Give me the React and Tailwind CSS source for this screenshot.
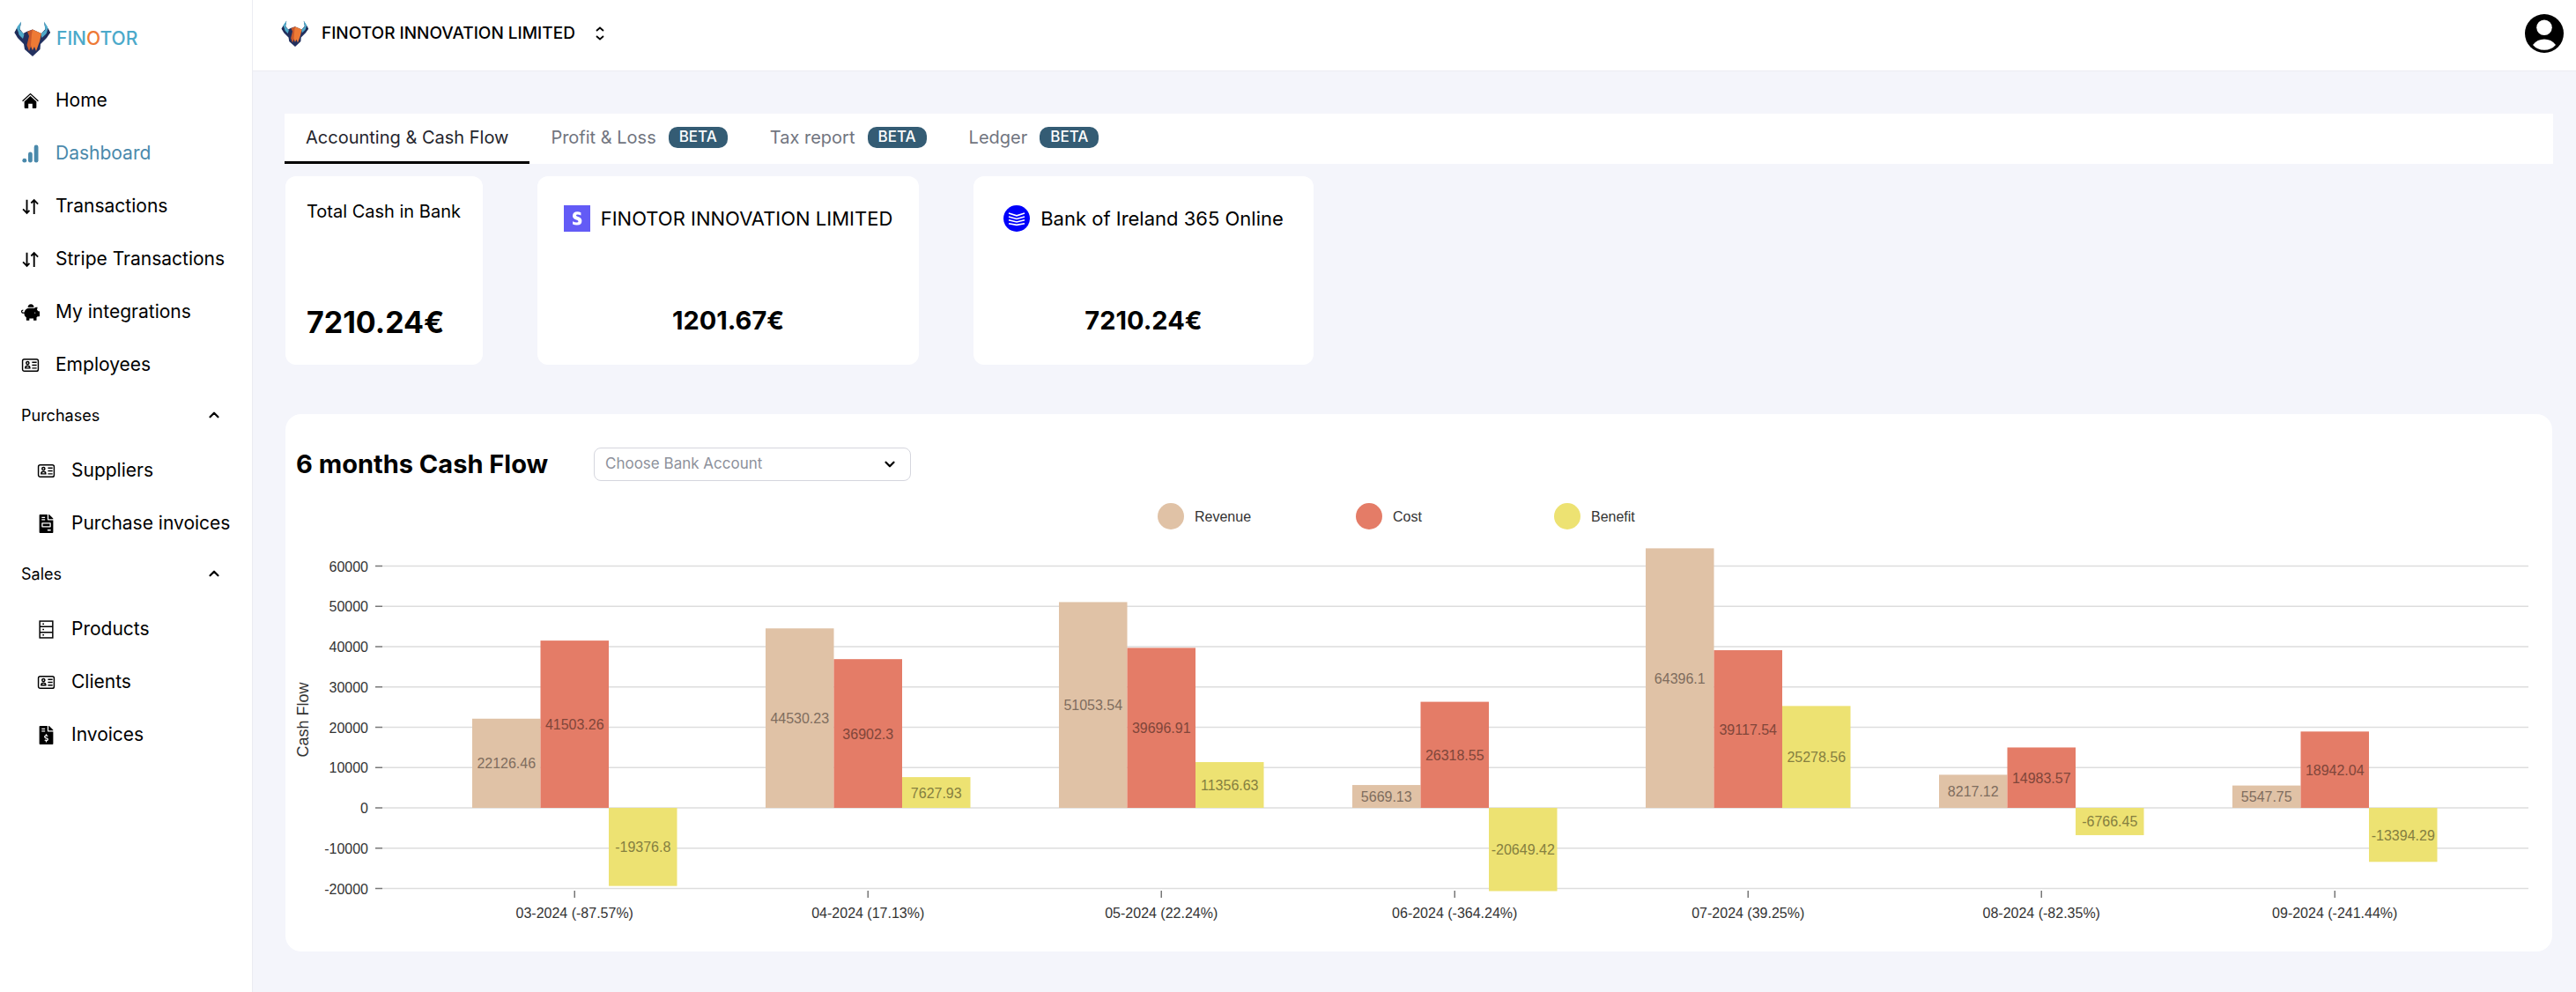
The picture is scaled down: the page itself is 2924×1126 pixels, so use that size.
import { useLayoutEffect, useRef, useState } from "react";
import {
  FaPiggyBank,
  FaFileInvoice,
  FaFileInvoiceDollar,
} from "react-icons/fa";
import { FiChevronDown, FiChevronUp } from "react-icons/fi";

const mainLinks = [
  { label: "Home", icon: HomeIcon },
  { label: "Dashboard", icon: BarsIcon, active: true },
  { label: "Transactions", icon: ArrowsIcon },
  { label: "Stripe Transactions", icon: ArrowsIcon },
  { label: "My integrations", icon: FaPiggyBank },
  { label: "Employees", icon: CardIcon },
];

const linkGroups = [
  {
    title: "Purchases",
    links: [
      { label: "Suppliers", icon: CardIcon },
      { label: "Purchase invoices", icon: FaFileInvoice },
    ],
  },
  {
    title: "Sales",
    links: [
      { label: "Products", icon: DrawersIcon },
      { label: "Clients", icon: CardIcon },
      { label: "Invoices", icon: FaFileInvoiceDollar },
    ],
  },
];

const tabs = [
  { label: "Accounting & Cash Flow", active: true },
  { label: "Profit & Loss", beta: true },
  { label: "Tax report", beta: true },
  { label: "Ledger", beta: true },
];

const months = [
  { label: "03-2024 (-87.57%)", values: [22126.46, 41503.26, -19376.8] },
  { label: "04-2024 (17.13%)", values: [44530.23, 36902.3, 7627.93] },
  { label: "05-2024 (22.24%)", values: [51053.54, 39696.91, 11356.63] },
  { label: "06-2024 (-364.24%)", values: [5669.13, 26318.55, -20649.42] },
  { label: "07-2024 (39.25%)", values: [64396.1, 39117.54, 25278.56] },
  { label: "08-2024 (-82.35%)", values: [8217.12, 14983.57, -6766.45] },
  { label: "09-2024 (-241.44%)", values: [5547.75, 18942.04, -13394.29] },
];

const series = [
  { name: "Revenue", color: "#e0c2a6", text: "#7f6d5e" },
  { name: "Cost", color: "#e47c67", text: "#80463a" },
  { name: "Benefit", color: "#ede272", text: "#857f40" },
];

const yTicks = [
  60000, 50000, 40000, 30000, 20000, 10000, 0, -10000, -20000,
];

function BullLogo({ className }) {
  return (
    <svg viewBox="0 0 42 40" className={className} aria-hidden="true">
      <path
        d="M8 1 5 6 0.5 13 4 19 11 26 12 32 21 40 29.5 32 30 26 37 19 41 13 37 6 34 1 35.5 9 31 14 21 9.5 14 12 10.5 14 6.5 9Z"
        fill="#22305f"
      />
      <path d="M8 0.5 3.5 6.5 2 12 10 20 11.5 15 6.5 10Z" fill="#4fa9c9" />
      <path d="M34 0.5 38 6.5 39 12 31.5 19 30.5 14.5 35.5 10Z" fill="#4fa9c9" />
      <path d="M3 8 0.5 13 6 19 5 13Z" fill="#1f2c57" />
      <path d="M38.5 8 41 13 35.5 19 37 13Z" fill="#1f2c57" />
      <path d="M21 9.5 15 12 17 17 14.5 27 17 34 19 29 21 33Z" fill="#c9592c" />
      <path d="M21 9.5 31 14 29 23 25 34 23 29 21 33 19 27 20 15Z" fill="#ee7a35" />
    </svg>
  );
}

function HomeIcon({ className }) {
  return (
    <svg viewBox="0 0 20 20" className={className} aria-hidden="true">
      <path d="M1.500 10.200 10 2.400 18.500 10.200" fill="none" stroke="currentColor" strokeWidth="1.2" />
      <path
        d="M10 4.800 16.500 10.800V17.200q0 1-1 1h-3.300v-5H7.800v5H4.500q-1 0-1-1V10.800Z"
        fill="currentColor"
      />
    </svg>
  );
}

function BarsIcon({ className }) {
  return (
    <svg viewBox="0 0 20 22" className={className} aria-hidden="true">
      <g fill="currentColor">
        <circle cx="3" cy="19" r="2.6" />
        <rect x="7.4" y="9" width="5" height="12.6" rx="2.5" />
        <rect x="14.4" y="0.6" width="5" height="21" rx="2.5" />
      </g>
    </svg>
  );
}

function ArrowsIcon({ className }) {
  return (
    <svg viewBox="0 0 20 20" className={className} aria-hidden="true">
      <path
        d="M6.2 2.5V17M2 12.8 6.2 17 9 14.2M14 18V3M10.8 6.2 14 3 18.2 7.2"
        fill="none"
        stroke="currentColor"
        strokeWidth="1.8"
      />
    </svg>
  );
}

function CardIcon({ className }) {
  return (
    <svg viewBox="0 0 20 20" className={className} aria-hidden="true">
      <g fill="none" stroke="currentColor" strokeWidth="1.4">
        <rect x="1.500" y="3.500" width="17" height="13" rx="2" />
        <circle cx="7" cy="7.6" r="1.5" />
        <path d="M4.600 13.2q0-2.400 2.400-2.400t2.400 2.400Z" />
        <path d="M11.8 6.8H16.800M11.8 10H16.800M11.8 13.2H16.800" />
      </g>
    </svg>
  );
}

function DrawersIcon({ className }) {
  return (
    <svg viewBox="0 0 20 20" className={className} aria-hidden="true">
      <g fill="none" stroke="currentColor" strokeWidth="1.4">
        <rect x="3" y="1" width="14" height="18" />
        <path d="M3 7H17M3 13H17" />
        <path d="M6 4H7.6M6 10H7.6M6 16H7.6" />
      </g>
    </svg>
  );
}

function SidebarLink({ link, nested }) {
  const Icon = link.icon;
  return (
    <li>
      <a
        href="#"
        className={`flex h-[60px] items-center gap-[18px] text-[21px] whitespace-nowrap ${
          nested ? "pl-[42px]" : "pl-6"
        } ${link.active ? "text-[#4a89ab]" : "text-black"}`}
      >
        <Icon className="h-[21px] w-[21px] shrink-0" />
        {link.label}
      </a>
    </li>
  );
}

function Sidebar() {
  return (
    <aside className="w-[287px] shrink-0 border-r border-[#ebecf2] bg-white">
      <a href="#" className="flex h-[84px] items-center gap-1.5 pt-1 pl-4">
        <BullLogo className="h-10 w-[42px]" />
        <span className="text-[21px] font-medium text-[#4ba9ca]">
          FIN<span className="text-[#ee7a35]">O</span>TOR
        </span>
      </a>
      <nav>
        <ul>
          {mainLinks.map((link) => (
            <SidebarLink key={link.label} link={link} />
          ))}
        </ul>
        {linkGroups.map((group) => (
          <div key={group.title}>
            <button
              type="button"
              className="mb-1.5 flex h-[54px] w-full items-center justify-between pr-[34px] pl-6 text-[18px]"
            >
              {group.title}
              <FiChevronUp className="h-[18px] w-[18px]" strokeWidth={3} />
            </button>
            <ul>
              {group.links.map((link) => (
                <SidebarLink key={link.label} link={link} nested />
              ))}
            </ul>
          </div>
        ))}
      </nav>
    </aside>
  );
}

function Header() {
  return (
    <header className="flex h-[81px] items-center justify-between border-b border-[#ebecf2] bg-white pr-3.5 pb-1 pl-8">
      <button type="button" className="flex items-center gap-3.5">
        <BullLogo className="h-[30px] w-8" />
        <span className="text-[19px] font-medium">
          FINOTOR INNOVATION LIMITED
        </span>
        <svg viewBox="0 0 12 16" className="ml-2 h-4 w-3" aria-hidden="true">
          <path
            d="M2 5 6 1.5 10 5M2 11 6 14.5 10 11"
            fill="none"
            stroke="currentColor"
            strokeWidth="1.8"
          />
        </svg>
      </button>
      <button type="button" aria-label="Account">
        <svg viewBox="0 0 44 44" className="h-11 w-11">
          <circle cx="22" cy="22" r="22" fill="#000" />
          <circle cx="22" cy="15.3" r="8.8" fill="#fff" />
          <path d="M9 35q5-6.400 13-6.400T35 35q-5 5.800-13 5.800T9 35Z" fill="#fff" />
        </svg>
      </button>
    </header>
  );
}

function Tabs() {
  return (
    <div role="tablist" className="flex h-[57px] bg-white">
      {tabs.map((tab) => (
        <button
          key={tab.label}
          type="button"
          role="tab"
          aria-selected={!!tab.active}
          className={`flex items-center gap-3.5 border-b-[3px] px-6 text-[20px] whitespace-nowrap ${
            tab.active
              ? "border-black text-[#24252d]"
              : "border-transparent text-[#71757f]"
          }`}
        >
          {tab.label}
          {tab.beta && (
            <span className="flex h-6 items-center rounded-[10px] bg-[#345c74] px-3 text-[17px] font-medium text-white">
              BETA
            </span>
          )}
        </button>
      ))}
    </div>
  );
}

function AccountCard({ name, amount, icon, className }) {
  return (
    <div
      className={`flex h-[214px] shrink-0 flex-col items-center rounded-xl bg-white pt-8 ${className}`}
    >
      <div className="flex h-8 items-center gap-3 text-[22px] whitespace-nowrap">
        {icon}
        {name}
      </div>
      <p className="mt-20 text-[29px] leading-10 font-bold">{amount}</p>
    </div>
  );
}

function StripeIcon() {
  return (
    <svg viewBox="0 0 30 30" className="h-[30px] w-[30px] shrink-0" aria-hidden="true">
      <rect width="30" height="30" fill="#635bf6" />
      <path
        d="M19.400 8.300v3.300q-2-1-3.900-1-1.600 0-1.600.9 0 .8 2.200 1.400 4.300 1.200 4.300 4.800 0 4.900-5.700 4.900-2.600 0-4.600-1v-3.400q2.300 1.300 4.500 1.300 1.900 0 1.900-1.200 0-.9-2.400-1.700-4.100-1.300-4.100-4.500 0-4.800 5.500-4.800 2.100 0 3.900 1Z"
        fill="#fff"
      />
    </svg>
  );
}

function BankIcon() {
  return (
    <svg viewBox="0 0 30 30" className="h-[30px] w-[30px] shrink-0" aria-hidden="true">
      <circle cx="15" cy="15" r="15" fill="#0000fa" />
      <path
        d="M6 9 15 11.800 24 9M6 12.900 15 15.400 24 12.900M6 16.800 15 19 24 16.800M6 20.700 15 22.400 24 20.700"
        fill="none"
        stroke="#fff"
        strokeWidth="1.6"
      />
    </svg>
  );
}

function CashFlowChart() {
  const ref = useRef(null);
  const [width, setWidth] = useState(2573);

  useLayoutEffect(() => {
    const update = () => setWidth(ref.current.clientWidth);
    update();
    window.addEventListener("resize", update);
    return () => window.removeEventListener("resize", update);
  }, []);

  const left = 110;
  const right = width - 27;
  const bottom = 465;
  const plotWidth = right - left;
  const y = (value) => 371 - value * 0.004575;

  // one band per month, 30% of each step is empty
  const step = Math.floor(plotWidth / (months.length + 0.3));
  const barWidth = Math.floor((step * 1.4) / series.length) / 2;
  const bandWidth = barWidth * series.length;
  const start =
    left + Math.floor((plotWidth - step * (months.length - 1) - bandWidth) / 2);
  const legendStart = left + plotWidth / 2 - 338;

  return (
    <div ref={ref}>
      <svg
        width={width}
        height="534"
        role="img"
        aria-label="Cash flow by month"
        className="block font-['Liberation_Sans',Arial,sans-serif] text-[16px]"
      >
        {yTicks.map((tick) => (
          <g key={tick}>
            <line x1={left} x2={right} y1={y(tick)} y2={y(tick)} stroke="#dddddd" strokeWidth="1.5" />
            <line x1={left - 8} x2={left} y1={y(tick)} y2={y(tick)} stroke="#777777" strokeWidth="1.5" />
            <text x={left - 16} y={y(tick)} dy="6" textAnchor="end" fill="#333333">
              {tick}
            </text>
          </g>
        ))}

        {months.map((month, i) => {
          const x = start + i * step;
          const center = x + bandWidth / 2;
          return (
            <g key={month.label}>
              {month.values.map((value, s) => (
                <g key={series[s].name}>
                  <rect
                    x={x + s * barWidth}
                    y={Math.min(y(value), y(0))}
                    width={barWidth}
                    height={Math.abs(y(value) - y(0))}
                    fill={series[s].color}
                  />
                  <text
                    x={x + (s + 0.5) * barWidth}
                    y={(y(value) + y(0)) / 2}
                    dy="6"
                    textAnchor="middle"
                    fill={series[s].text}
                  >
                    {value}
                  </text>
                </g>
              ))}
              <line x1={center} x2={center} y1={bottom} y2={bottom + 8} stroke="#777777" strokeWidth="1.5" />
              <text x={center} y={bottom + 31} textAnchor="middle" fill="#333333">
                {month.label}
              </text>
            </g>
          );
        })}

        <text
          transform="translate(26 271) rotate(-90)"
          textAnchor="middle"
          fill="#333333"
          className="text-[18px]"
        >
          Cash Flow
        </text>

        {series.map((item, i) => (
          <g key={item.name}>
            <circle cx={legendStart + i * 225 + 15} cy="40" r="15" fill={item.color} />
            <text x={legendStart + i * 225 + 42} y="46" fill="#333333">
              {item.name}
            </text>
          </g>
        ))}
      </svg>
    </div>
  );
}

export default function App() {
  return (
    <div className="flex min-h-screen bg-[#f4f5fb] font-['Inter',sans-serif] text-black">
      <Sidebar />
      <div className="min-w-0 flex-1">
        <Header />
        <main className="pt-12 pr-[26px] pb-11 pl-9">
          <Tabs />

          <section className="mt-3.5 flex gap-[62px] px-px">
            <div className="flex h-[214px] w-[224px] shrink-0 flex-col justify-between rounded-xl bg-white px-6 pt-6 pb-6">
              <h2 className="text-[20px] leading-8 whitespace-nowrap">
                Total Cash in Bank
              </h2>
              <p className="text-[34px] leading-[48px] font-bold">7210.24€</p>
            </div>
            <AccountCard
              name="FINOTOR INNOVATION LIMITED"
              amount="1201.67€"
              icon={<StripeIcon />}
              className="w-[433px]"
            />
            <AccountCard
              name="Bank of Ireland 365 Online"
              amount="7210.24€"
              icon={<BankIcon />}
              className="w-[386px]"
            />
          </section>

          <section className="mx-px mt-14 rounded-[18px] bg-white pt-[38px]">
            <div className="flex h-[38px] items-center pl-3">
              <h2 className="w-[338px] text-[29px] font-bold whitespace-nowrap">
                6 months Cash Flow
              </h2>
              <div className="relative">
                <select
                  aria-label="Bank account"
                  className="h-[38px] w-[360px] appearance-none rounded-lg border border-[#d5d6de] bg-white px-3 text-[17px] text-[#8d919b]"
                >
                  <option>Choose Bank Account</option>
                </select>
                <FiChevronDown
                  className="pointer-events-none absolute top-[10px] right-[15px] h-[18px] w-[18px]"
                  strokeWidth={3}
                />
              </div>
            </div>
            <CashFlowChart />
          </section>
        </main>
      </div>
    </div>
  );
}
